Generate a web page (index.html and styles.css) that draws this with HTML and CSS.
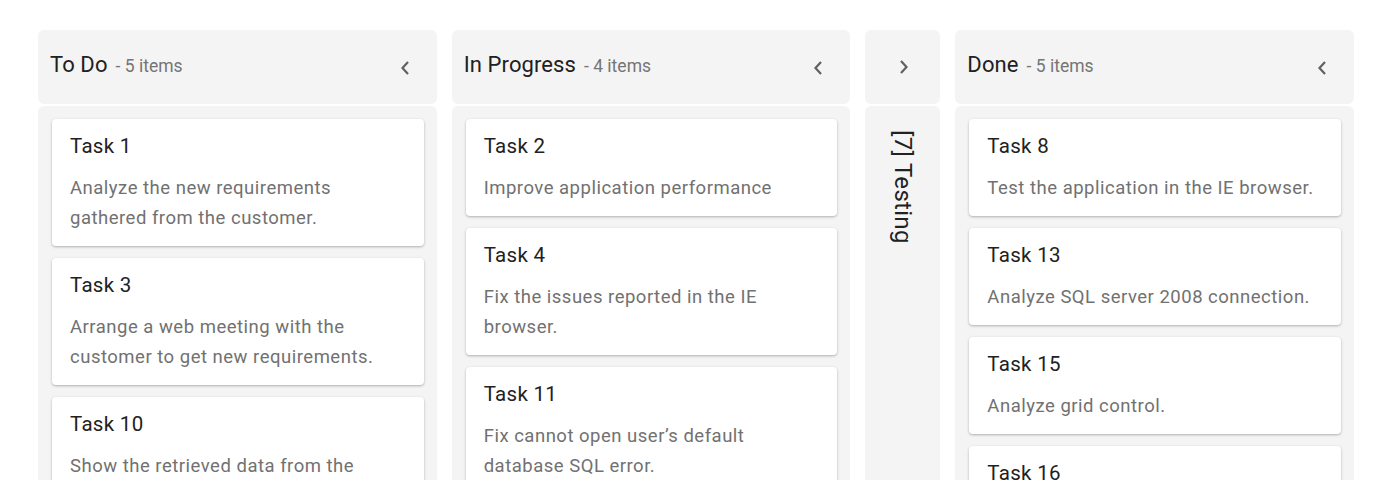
FILE: index.html
```html
<!DOCTYPE html>
<html>
<head>
<meta charset="utf-8">
<link rel="stylesheet" href="styles.css">
</head>
<body>
<div class="board">
  <div class="column">
    <div class="col-header">
      <div class="col-title"><span class="name">To Do</span><span class="count">- 5 items</span></div>
      <button class="toggle"><svg width="10" height="16" viewBox="0 0 10 16"><path d="M8 2 L2.5 8 L8 14" fill="none" stroke="#616161" stroke-width="2.2"/></svg></button>
    </div>
    <div class="col-body">
      <div class="card"><div class="card-title">Task 1</div><div class="card-text">Analyze the new requirements gathered from the customer.</div></div>
      <div class="card"><div class="card-title">Task 3</div><div class="card-text">Arrange a web meeting with the customer to get new requirements.</div></div>
      <div class="card"><div class="card-title">Task 10</div><div class="card-text">Show the retrieved data from the server in grid control.</div></div>
    </div>
  </div>
  <div class="column">
    <div class="col-header">
      <div class="col-title"><span class="name">In Progress</span><span class="count">- 4 items</span></div>
      <button class="toggle"><svg width="10" height="16" viewBox="0 0 10 16"><path d="M8 2 L2.5 8 L8 14" fill="none" stroke="#616161" stroke-width="2.2"/></svg></button>
    </div>
    <div class="col-body">
      <div class="card"><div class="card-title">Task 2</div><div class="card-text">Improve application performance</div></div>
      <div class="card"><div class="card-title">Task 4</div><div class="card-text">Fix the issues reported in the IE browser.</div></div>
      <div class="card"><div class="card-title">Task 11</div><div class="card-text">Fix cannot open user’s default database SQL error.</div></div>
    </div>
  </div>
  <div class="column collapsed">
    <div class="col-header">
      <button class="toggle"><svg width="10" height="16" viewBox="0 0 10 16"><path d="M2 2 L7.5 8 L2 14" fill="none" stroke="#616161" stroke-width="2.2"/></svg></button>
    </div>
    <div class="col-body">
      <div class="vertical-title">[7] Testing</div>
    </div>
  </div>
  <div class="column">
    <div class="col-header">
      <div class="col-title"><span class="name">Done</span><span class="count">- 5 items</span></div>
      <button class="toggle"><svg width="10" height="16" viewBox="0 0 10 16"><path d="M8 2 L2.5 8 L8 14" fill="none" stroke="#616161" stroke-width="2.2"/></svg></button>
    </div>
    <div class="col-body">
      <div class="card"><div class="card-title">Task 8</div><div class="card-text">Test the application in the IE browser.</div></div>
      <div class="card"><div class="card-title">Task 13</div><div class="card-text">Analyze SQL server 2008 connection.</div></div>
      <div class="card"><div class="card-title">Task 15</div><div class="card-text">Analyze grid control.</div></div>
      <div class="card"><div class="card-title">Task 16</div><div class="card-text">Analyze stored procedures.</div></div>
    </div>
  </div>
</div>
</body>
</html>
```
FILE: styles.css
```css
html, body {
  margin: 0;
  padding: 0;
  background: #ffffff;
  font-family: Roboto, "Liberation Sans", sans-serif;
  height: 480px;
  overflow: hidden;
}
.board {
  display: flex;
  gap: 15px;
  padding: 30px 36px 0 38px;
  align-items: stretch;
  height: 700px;
}
.column {
  flex: 1 1 0;
  display: flex;
  flex-direction: column;
  gap: 2px;
  min-width: 0;
}
.column.collapsed {
  flex: 0 0 75px;
}
.col-header {
  height: 74px;
  background: #f4f4f4;
  border-radius: 6px;
  display: flex;
  align-items: center;
  justify-content: space-between;
  padding: 0 20px 5px 12px;
  box-sizing: border-box;
}
.collapsed .col-header {
  justify-content: center;
  padding: 0 0 6px 2px;
}
.col-title {
  display: flex;
  align-items: baseline;
  gap: 8px;
}
.name {
  font-size: 22px;
  color: #212121;
  letter-spacing: 0.1px;
}
.count {
  font-size: 17.5px;
  color: #757575;
}
.toggle {
  border: 0;
  background: transparent;
  padding: 0;
  width: 24px;
  height: 24px;
  display: flex;
  align-items: center;
  justify-content: center;
  margin-top: 6px;
}
.collapsed .toggle {
  margin-top: 6px;
}
.col-body {
  flex: 1;
  background: #f4f4f4;
  border-radius: 6px 6px 0 0;
  padding: 13px 13px 0 14px;
  display: flex;
  flex-direction: column;
  gap: 12px;
}
.collapsed .col-body {
  padding: 24px 0 0 0;
  align-items: center;
}
.vertical-title {
  writing-mode: vertical-rl;
  font-size: 24px;
  color: #212121;
  line-height: 26px;
  letter-spacing: 0.3px;
}
.card {
  background: #ffffff;
  border-radius: 4px;
  box-shadow: 0 1px 3px rgba(0, 0, 0, 0.22), 0 1px 2px rgba(0, 0, 0, 0.08);
  padding: 14px 18px 13px 18px;
  display: flex;
  flex-direction: column;
  gap: 14px;
}
.card-title {
  font-size: 20.5px;
  line-height: 26px;
  color: #212121;
  letter-spacing: 0.3px;
}
.card-text {
  font-size: 18.5px;
  line-height: 30px;
  color: #717171;
  letter-spacing: 0.5px;
}
```
